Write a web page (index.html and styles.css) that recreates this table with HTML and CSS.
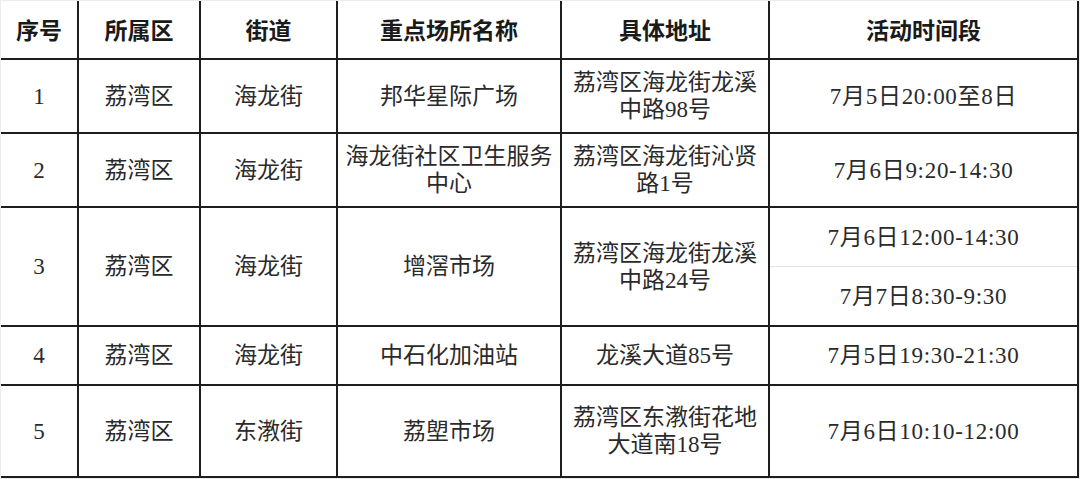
FILE: index.html
```html
<!DOCTYPE html>
<html lang="zh-CN">
<head>
<meta charset="utf-8">
<title>重点场所</title>
<link rel="stylesheet" href="styles.css">
</head>
<body>
<div class="sheet">
  <div class="grid">
    <div class="cell head">序号</div>
    <div class="cell head">所属区</div>
    <div class="cell head">街道</div>
    <div class="cell head">重点场所名称</div>
    <div class="cell head">具体地址</div>
    <div class="cell head">活动时间段</div>

    <div class="cell">1</div>
    <div class="cell">荔湾区</div>
    <div class="cell">海龙街</div>
    <div class="cell">邦华星际广场</div>
    <div class="cell">荔湾区海龙街龙溪<br>中路98号</div>
    <div class="cell time">7月5日20:00至8日</div>

    <div class="cell">2</div>
    <div class="cell">荔湾区</div>
    <div class="cell">海龙街</div>
    <div class="cell">海龙街社区卫生服务<br>中心</div>
    <div class="cell">荔湾区海龙街沁贤<br>路1号</div>
    <div class="cell time">7月6日9:20-14:30</div>

    <div class="cell">3</div>
    <div class="cell">荔湾区</div>
    <div class="cell">海龙街</div>
    <div class="cell">增滘市场</div>
    <div class="cell">荔湾区海龙街龙溪<br>中路24号</div>
    <div class="cell split time">
      <div class="sub">7月6日12:00-14:30</div>
      <div class="sub">7月7日8:30-9:30</div>
    </div>

    <div class="cell">4</div>
    <div class="cell">荔湾区</div>
    <div class="cell">海龙街</div>
    <div class="cell">中石化加油站</div>
    <div class="cell">龙溪大道85号</div>
    <div class="cell time">7月5日19:30-21:30</div>

    <div class="cell">5</div>
    <div class="cell">荔湾区</div>
    <div class="cell">东漖街</div>
    <div class="cell">荔塱市场</div>
    <div class="cell">荔湾区东漖街花地<br>大道南18号</div>
    <div class="cell time">7月6日10:10-12:00</div>
  </div>
</div>
</body>
</html>
```

FILE: styles.css
```css
html, body {
  margin: 0;
  padding: 0;
  background: #ececec;
}

.sheet {
  width: 1080px;
  height: 479px;
  padding: 1px 1px 0 1px;
  box-sizing: border-box;
}

.grid {
  display: grid;
  grid-template-columns: 76px 120px 135px 222px 206px 307px;
  grid-template-rows: 57px 72px 72px 117px 57px 90px;
  gap: 2px;
  background: #1e1e1e;
  border-right: 2px solid #1e1e1e;
  border-bottom: 2px solid #1e1e1e;
  width: max-content;
  font-family: "Liberation Serif", "Noto Sans CJK SC", serif;
  font-size: 23px;
  line-height: 27px;
  color: #2a2a2a;
}

.cell {
  background: #ffffff;
  display: flex;
  align-items: center;
  justify-content: center;
  text-align: center;
}

.head {
  font-weight: 700;
  color: #1a1a1a;
  padding-top: 4px;
}

.time {
  letter-spacing: 0.7px;
}

.split {
  flex-direction: column;
  align-items: stretch;
}

.sub {
  flex: 1;
  display: flex;
  align-items: center;
  justify-content: center;
}

.sub + .sub {
  border-top: 1px solid #e2e2e2;
}
```
